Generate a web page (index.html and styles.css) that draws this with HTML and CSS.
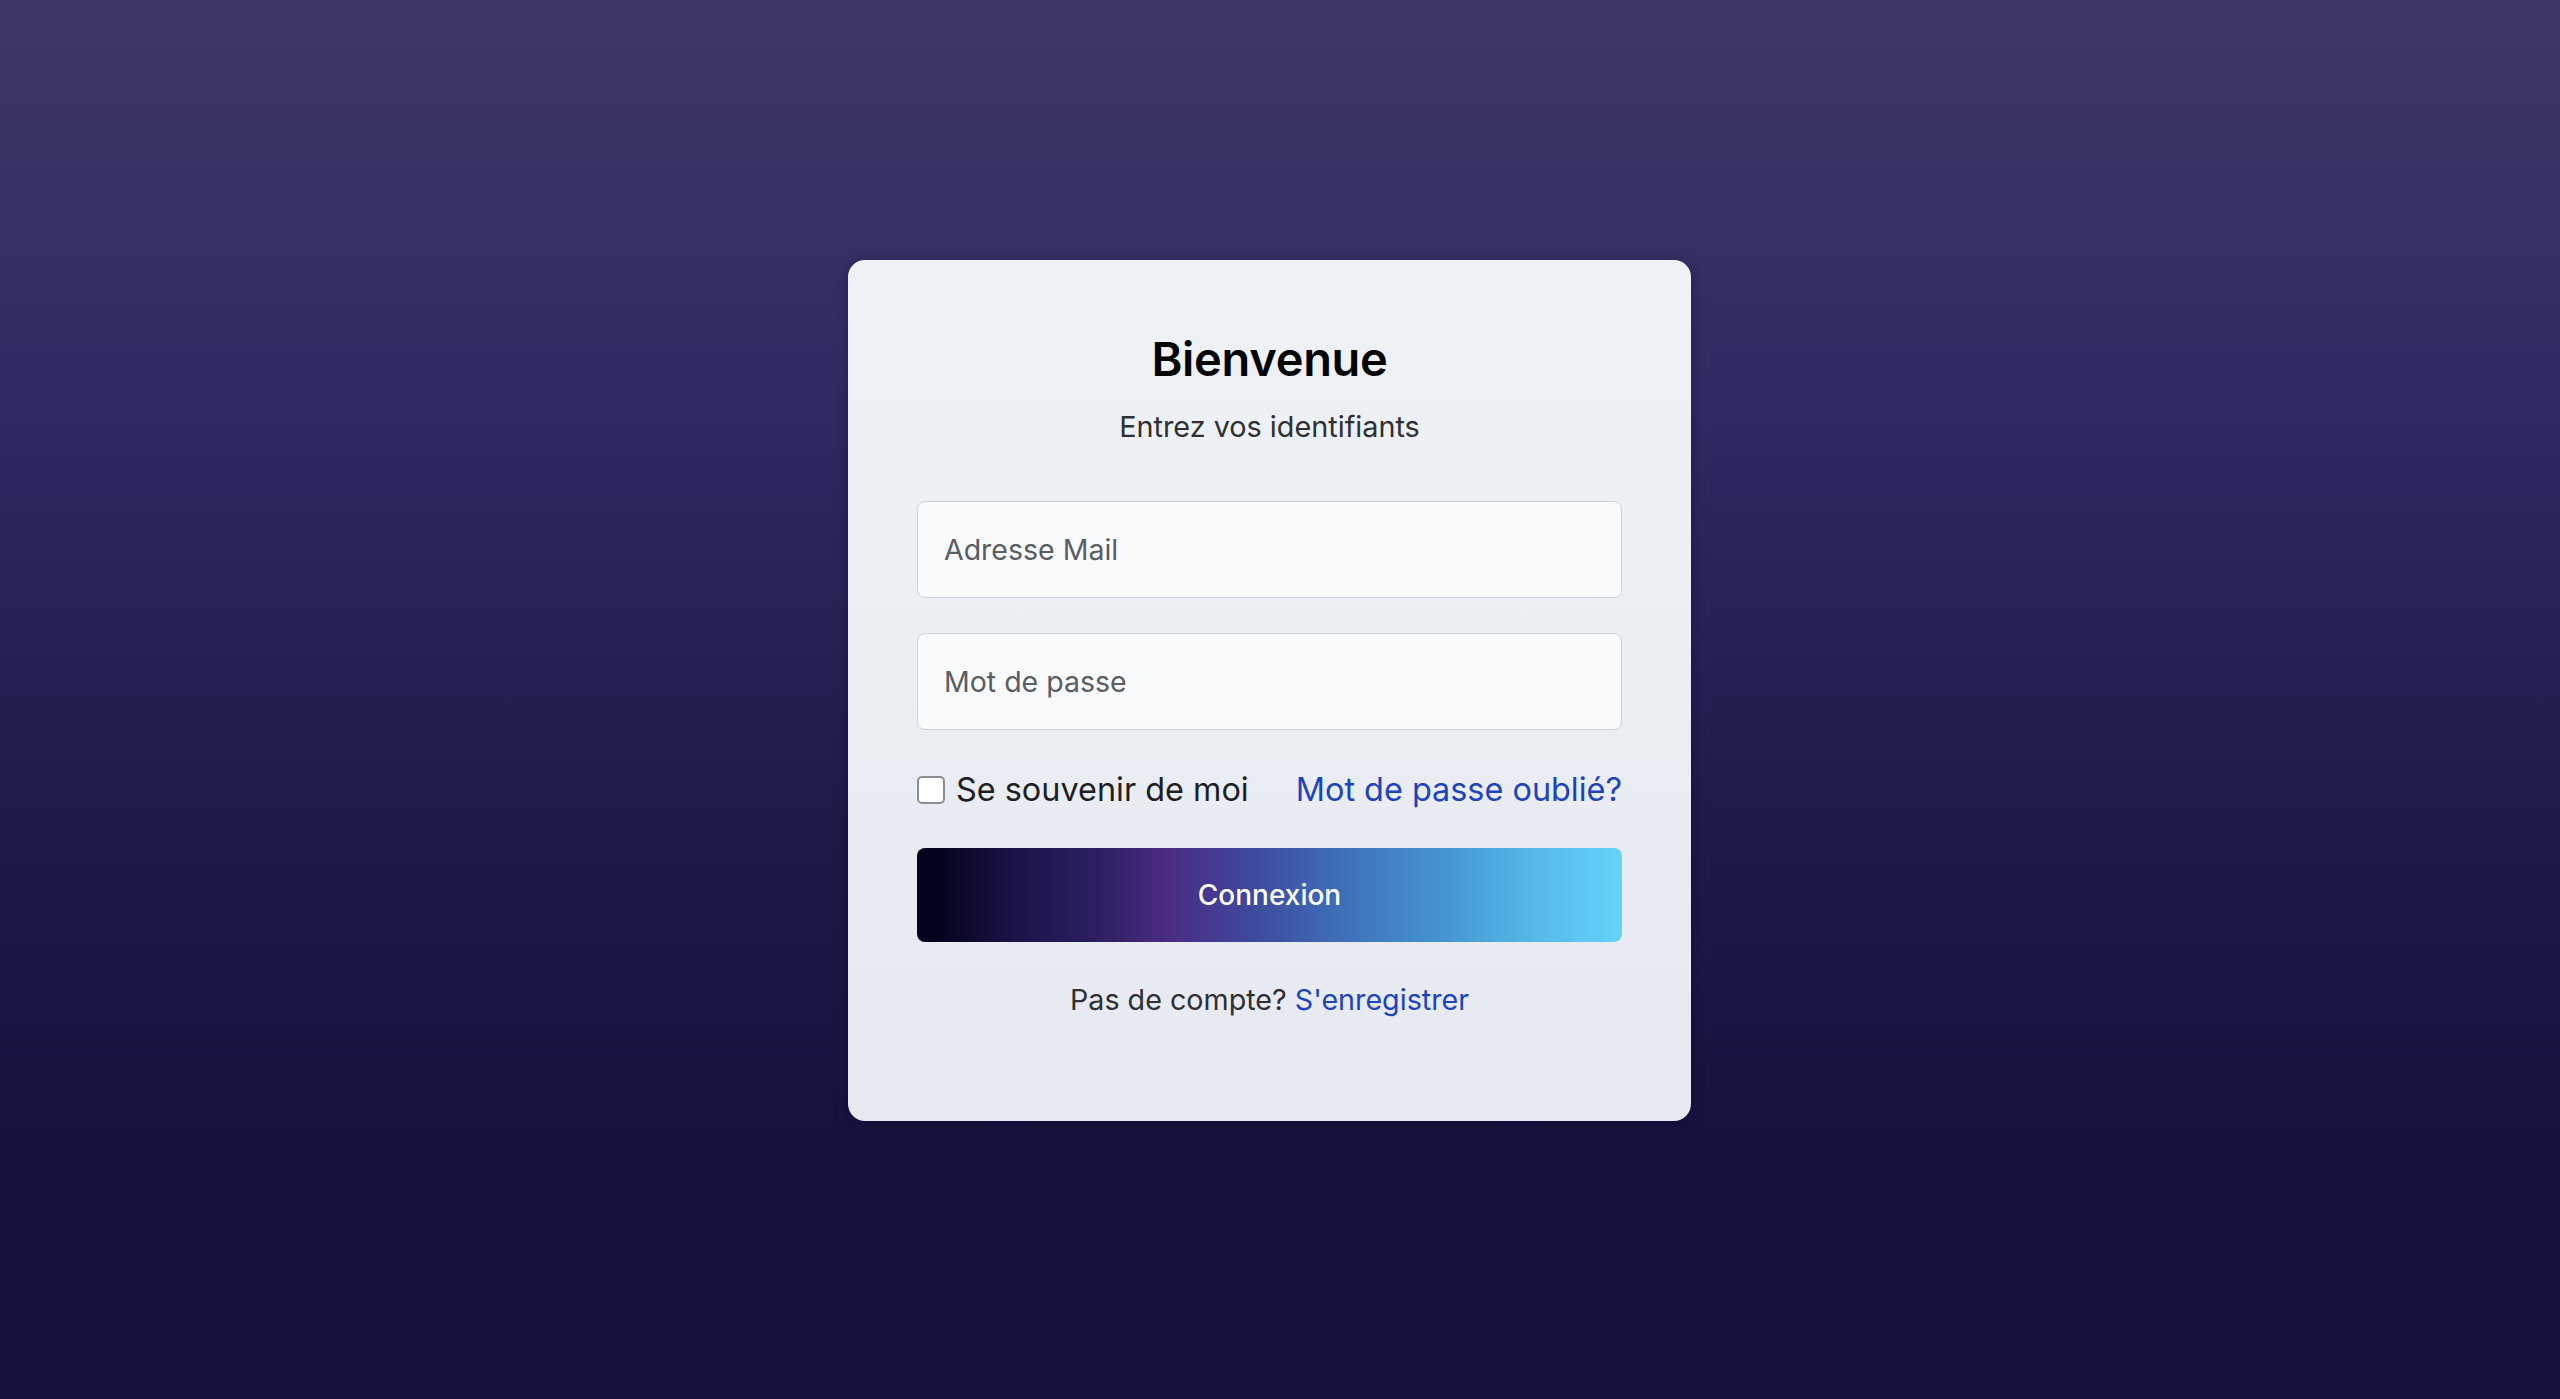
FILE: index.html
```html
<!DOCTYPE html>
<html lang="fr">
<head>
<meta charset="utf-8">
<title>Connexion</title>
<link rel="stylesheet" href="styles.css">
</head>
<body>
<main class="page">
  <form class="card">
    <h1 class="title">Bienvenue</h1>
    <p class="subtitle">Entrez vos identifiants</p>
    <input class="field" type="email" placeholder="Adresse Mail">
    <input class="field field-second" type="password" placeholder="Mot de passe">
    <div class="row">
      <label class="remember"><span class="box"></span>Se souvenir de moi</label>
      <a class="link" href="#">Mot de passe oublié?</a>
    </div>
    <button class="btn" type="button">Connexion</button>
    <p class="footer">Pas de compte? <a class="link" href="#">S'enregistrer</a></p>
  </form>
</main>
</body>
</html>
```

FILE: styles.css
```css
html, body {
  margin: 0;
  padding: 0;
  height: 100%;
}
body {
  background: linear-gradient(to bottom, #3e3868 0%, #2e2a62 30%, #1d1949 60%, #15123f 85%, #15123f 100%);
  font-family: "Inter", "Liberation Sans", sans-serif;
  overflow: hidden;
}
.page {
  box-sizing: border-box;
  height: 100%;
  display: flex;
  align-items: flex-start;
  justify-content: center;
  padding-top: 260px;
  padding-right: 21px;
}
.card {
  box-sizing: border-box;
  width: 843px;
  padding: 71px 69px 104px;
  border-radius: 17px;
  background: linear-gradient(to bottom, #eff2f5 0%, #e6e9f0 100%);
  box-shadow: 0 4px 14px rgba(5, 3, 25, 0.35);
  display: flex;
  flex-direction: column;
}
.title {
  margin: 0;
  font-size: 47px;
  line-height: 56px;
  font-weight: 600;
  color: #050505;
  text-align: center;
  letter-spacing: -0.3px;
}
.subtitle {
  margin: 24px 0 0;
  font-size: 28.8px;
  line-height: 32px;
  color: #2e3033;
  text-align: center;
}
.field {
  box-sizing: border-box;
  margin: 58px 0 0;
  height: 97px;
  width: 100%;
  padding: 0 26px;
  border: 1.5px solid #cfd3d9;
  border-radius: 8px;
  background: #f8fafc;
  font-family: inherit;
  font-size: 28.5px;
  color: #333;
  outline: none;
}
.field::placeholder {
  color: #5a5d62;
}
.field-second {
  margin-top: 35px;
}
.row {
  margin-top: 40px;
  height: 40px;
  display: flex;
  align-items: center;
  justify-content: space-between;
  font-size: 32.4px;
  line-height: 40px;
}
.remember {
  display: flex;
  align-items: center;
  color: #1e1f22;
}
.box {
  box-sizing: border-box;
  width: 28px;
  height: 28px;
  margin-right: 11px;
  border: 2px solid #8a8d92;
  border-radius: 5px;
  background: #ffffff;
}
.link {
  color: #1d43bd;
  text-decoration: none;
}
.btn {
  margin-top: 38px;
  height: 94px;
  width: 100%;
  border: none;
  border-radius: 8px;
  background: linear-gradient(90deg, #04031d 3%, #1a1448 14%, #2e1f62 26%, #4b2c84 36%, #3e4a9e 48%, #3f74bc 62%, #4596d0 75%, #56baea 88%, #64d3fb 100%);
  color: #ffffff;
  font-family: inherit;
  font-size: 28px;
  font-weight: 500;
}
.footer {
  margin: 41px 0 0;
  font-size: 28.7px;
  line-height: 34px;
  color: #2e3033;
  text-align: center;
}
```
